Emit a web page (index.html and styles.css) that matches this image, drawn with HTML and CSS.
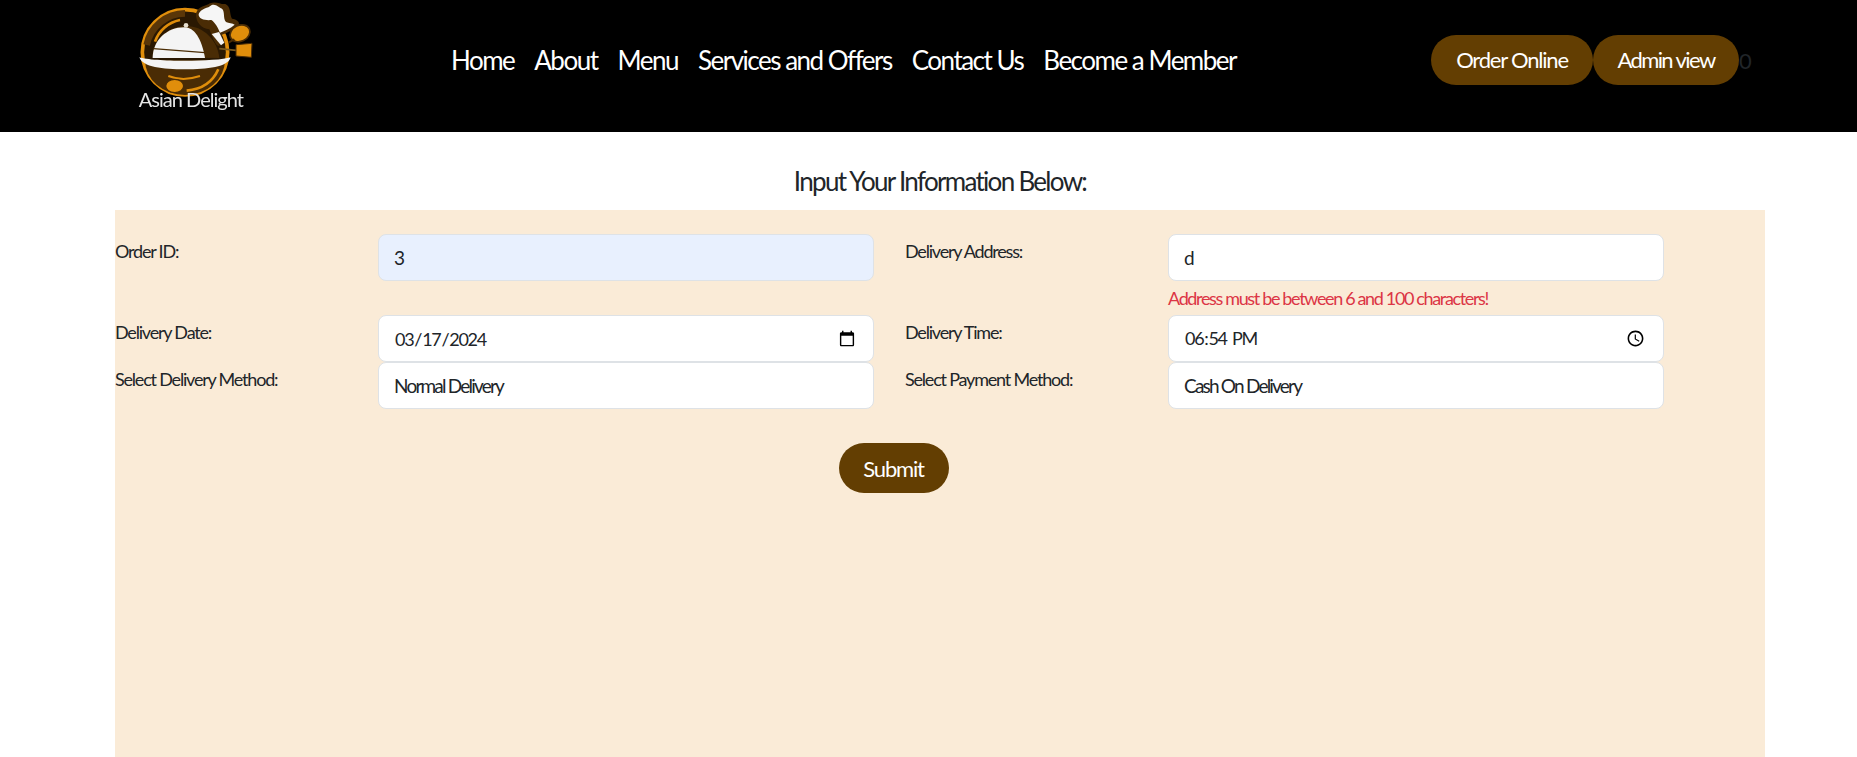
FILE: index.html
```html
<!DOCTYPE html>
<html lang="en">
<head>
    <meta charset="UTF-8">
    <meta name="viewport" content="width=device-width, initial-scale=1.0">
    <title>Asian Delight - Delivery</title>
    <link rel="stylesheet" href="styles.css">
</head>
<body>
    <header class="site-header">
        <a class="logo" href="#">
            <svg width="220" height="130" viewBox="0 0 660 390">
                <!-- plate and ring -->
                <circle cx="255" cy="157" r="128" fill="#2a1802" stroke="#e08e0b" stroke-width="11"/>
                <path d="M135 180a120 105 0 0 0 240 0z" fill="#4a2c05"/>
                <path d="M140 135a118 118 0 0 1 115-95" fill="none" stroke="#5a3608" stroke-width="20"/>
                <path d="M165 125a100 100 0 0 1 75-65" fill="none" stroke="#e08e0b" stroke-width="8"/>
                <path d="M260 272c50-4 80-30 95-64" fill="none" stroke="#e08e0b" stroke-width="8"/>
                <path d="M205 228c30 12 65 10 95 0" fill="none" stroke="#e08e0b" stroke-width="6"/>
                <ellipse cx="224" cy="258" rx="27" ry="20" fill="#e08e0b" stroke="#4a2c05" stroke-width="4"/>
                <!-- dome -->
                <path d="M158 172c0-52 45-94 100-94s95 45 100 96z" fill="#4a2c05"/>
                <path d="M158 174c0-52 42-92 95-92 30 0 52 34 62 92z" fill="#f4f4f4"/>
                <path d="M160 146l155 12" stroke="#4a2c05" stroke-width="4"/>
                <circle cx="258" cy="76" r="7" fill="#e8e0d0"/>
                <path d="M118 172c40 14 232 14 274 0-8 30-70 36-137 36s-127-6-137-36z" fill="#f4f4f4"/>
                <!-- chef hat -->
                <path d="M288 40c8-24 30-20 42-30 18-8 32 4 46 2 18 8 12 32 20 44 14 2 24 10 20 18-18 18-36 24-50 30l-8 34c-12 2-22-30-30-50-24-2-42-22-40-48z" fill="#4a2c05"/>
                <path d="M296 42c8-18 28-16 38-26 14-6 22 8 32 10 10 10 2 28 12 40 8 4 20 4 26 8-14 12-30 18-44 24-6-14-14-30-26-38-16 2-40-2-38-18z" fill="#f6f6f6"/>
                <path d="M335 102l28 34 10-8-16-32z" fill="#f4f4f4"/>
                <!-- spoon and spatula -->
                <ellipse cx="420" cy="100" rx="31" ry="24" fill="#e08e0b" stroke="#4a2c05" stroke-width="5" transform="rotate(-25 420 100)"/>
                <path d="M385 128l18-10" stroke="#4a2c05" stroke-width="6"/>
                <path d="M358 146l50 5" stroke="#7a5a20" stroke-width="5"/>
                <path d="M408 134l48-4-2 42-46-4z" fill="#e08e0b" stroke="#4a2c05" stroke-width="3"/>
                <text class="logo-text" x="116" y="322">Asian Delight</text>
            </svg>
        </a>
        <nav class="main-nav">
            <a href="#" class="nav-link">Home</a>
            <a href="#" class="nav-link">About</a>
            <a href="#" class="nav-link">Menu</a>
            <a href="#" class="nav-link">Services and Offers</a>
            <a href="#" class="nav-link">Contact Us</a>
            <a href="#" class="nav-link">Become a Member</a>
        </nav>
        <div class="header-actions">
            <a href="#" class="btn-brown btn-order">Order Online</a>
            <a href="#" class="btn-brown btn-admin">Admin view</a>
            <span class="cart-count">0</span>
        </div>
    </header>

    <main class="content">
        <h2 class="form-title">Input Your Information Below:</h2>
        <form class="delivery-form">
            <div class="form-row">
                <div class="field">
                    <label for="orderId">Order ID:</label>
                    <div><input class="form-control autofilled" type="text" id="orderId" value="3"></div>
                </div>
                <div class="field">
                    <label for="address">Delivery Address:</label>
                    <div>
                        <input class="form-control" type="text" id="address" value="d">
                        <p class="error-text">Address must be between 6 and 100 characters!</p>
                    </div>
                </div>
            </div>
            <div class="form-row">
                <div class="field">
                    <label for="deliveryDate">Delivery Date:</label>
                    <div><input class="form-control date-control" type="date" id="deliveryDate" value="2024-03-17"></div>
                </div>
                <div class="field">
                    <label for="deliveryTime">Delivery Time:</label>
                    <div><input class="form-control date-control" type="time" id="deliveryTime" value="18:54"></div>
                </div>
            </div>
            <div class="form-row">
                <div class="field">
                    <label for="deliveryMethod">Select Delivery Method:</label>
                    <div>
                        <select class="form-control" id="deliveryMethod">
                            <option>Normal Delivery</option>
                        </select>
                    </div>
                </div>
                <div class="field">
                    <label for="paymentMethod">Select Payment Method:</label>
                    <div>
                        <select class="form-control" id="paymentMethod">
                            <option>Cash On Delivery</option>
                        </select>
                    </div>
                </div>
            </div>
            <div class="form-submit">
                <button type="button" class="btn-brown btn-submit">Submit</button>
            </div>
        </form>
    </main>
</body>
</html>
```

FILE: styles.css
```css
* {
    box-sizing: border-box;
}

html, body {
    height: 100%;
}

body {
    margin: 0;
    display: flex;
    flex-direction: column;
    background-color: #fff;
    color: #212529;
    font-family: "Lato", "Liberation Sans", sans-serif;
    overflow: hidden;
}

a {
    text-decoration: none;
}

.site-header {
    height: 132px;
    flex-shrink: 0;
    display: flex;
    align-items: center;
    padding: 0 107px 12px 100px;
    background-color: #000;
    white-space: nowrap;
}

.logo {
    display: block;
    height: 130px;
    align-self: flex-start;
    filter: blur(0.4px);
}

.logo-text {
    font-size: 60px;
    letter-spacing: -2.9px;
    fill: #e4e4e4;
}

.main-nav {
    display: flex;
    gap: 20px;
    margin-left: 131px;
}

.nav-link {
    color: #fff;
    font-size: 26px;
    line-height: 36px;
    letter-spacing: -1.5px;
}

.header-actions {
    display: flex;
    align-items: center;
    margin-left: auto;
}

.btn-brown {
    display: block;
    height: 50px;
    border: 0;
    border-radius: 25px;
    background-color: #633e02;
    color: #fff;
    font-family: inherit;
    font-size: 22px;
    line-height: 50px;
    letter-spacing: -1.2px;
    text-align: center;
    white-space: nowrap;
}

.btn-order {
    width: 162px;
}

.btn-admin {
    width: 146px;
    letter-spacing: -1.6px;
}

.cart-count {
    width: 11px;
    color: #212529;
    font-size: 22px;
}

.content {
    flex: 1;
    display: flex;
    flex-direction: column;
    margin: 0 92px 0 115px;
}

.form-title {
    margin: 0;
    height: 78px;
    line-height: 98px;
    text-align: center;
    font-size: 26px;
    font-weight: 400;
    letter-spacing: -1.7px;
}

.delivery-form {
    flex: 1;
    padding-top: 24px;
    background-color: #faebd7;
}

.form-row {
    display: flex;
    gap: 31px;
}

.field {
    display: grid;
    grid-template-columns: 263px 496px;
}

.field label {
    font-size: 18px;
    line-height: 34px;
    letter-spacing: -1.2px;
}

.form-control {
    display: block;
    width: 100%;
    height: 47px;
    padding: 0 15px;
    border: 1px solid #dee2e6;
    border-radius: 8px;
    background-color: #fff;
    color: #212529;
    font-family: inherit;
    font-size: 19px;
    letter-spacing: -1.8px;
    appearance: none;
}

.date-control {
    font-size: 18px;
    letter-spacing: -1.3px;
}

.autofilled {
    background-color: #e8f0fe;
}

.error-text {
    margin: 0;
    height: 34px;
    line-height: 34px;
    color: #dc3545;
    font-size: 18px;
    letter-spacing: -1.35px;
}

.form-submit {
    display: flex;
    justify-content: center;
    width: 1557px;
    margin-top: 34px;
}

.btn-submit {
    width: 110px;
}
```
